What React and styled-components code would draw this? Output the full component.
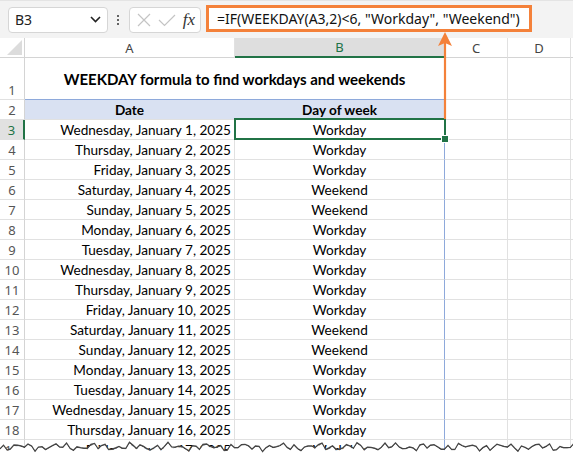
import React from 'react';
import styled, { createGlobalStyle, css } from 'styled-components';

const GlobalStyle = createGlobalStyle`
  html, body {
    margin: 0;
    padding: 0;
    background: #fff;
  }
  body {
    width: 573px;
    height: 456px;
    overflow: hidden;
    font-family: 'Lato', 'Liberation Sans', sans-serif;
  }
`;

const UI_FONT = `'Noto Sans', 'Open Sans', 'Liberation Sans', sans-serif`;
const GRID = '#e1e1e1';
const GREEN = '#217346';
const BLUE = '#8ea9db';
const ORANGE = '#f4813a';

const Sheet = styled.div`
  position: relative;
  width: 573px;
  height: 456px;
  overflow: hidden;
  background: #fff;
`;

/* ---------- formula bar ---------- */

const Toolbar = styled.div`
  display: flex;
  align-items: center;
  height: 38px;
  box-sizing: border-box;
  padding-left: 8px;
  background: #f3f3f3;
  border-top: 1px solid #e4e4e4;
  font-family: ${UI_FONT};
`;

const Box = styled.div`
  display: flex;
  align-items: center;
  box-sizing: border-box;
  height: 26px;
  background: #fff;
  border: 1px solid #d6d6d6;
  border-radius: 4px;
`;

const NameBox = styled(Box)`
  width: 100px;
  padding: 0 6px 0 6px;
  justify-content: space-between;
  font-size: 14px;
  color: #222;
`;

const Dots = styled.div`
  display: flex;
  flex-direction: column;
  gap: 2px;
  margin: 0 10px 0 9px;
  span {
    width: 2px;
    height: 2px;
    border-radius: 1px;
    background: #333;
  }
`;

const IconBox = styled(Box)`
  width: 72px;
  padding: 0 4px 0 6px;
  justify-content: space-between;
`;

const Fx = styled.span`
  font-family: 'Liberation Serif', serif;
  font-style: italic;
  font-size: 17px;
  color: #333;
  margin-right: 1px;
`;

const FormulaBox = styled.div`
  display: flex;
  align-items: center;
  box-sizing: border-box;
  width: 326px;
  height: 27px;
  margin: -3px 0 0 5px;
  padding-left: 8px;
  border: 3px solid ${ORANGE};
  background: #fff;
  font-size: 14px;
  color: #111;
  white-space: nowrap;
`;

/* ---------- worksheet grid ---------- */

const Grid = styled.div`
  display: grid;
  grid-template-columns: 25px 210px 210px 63px 63px 63px;
  grid-template-rows: 20px 42px repeat(18, 20px);
`;

const ColHead = styled.div`
  display: flex;
  align-items: center;
  justify-content: center;
  box-sizing: border-box;
  border-right: 1px solid ${GRID};
  border-bottom: 1px solid #d4d4d4;
  font-family: ${UI_FONT};
  font-size: 13px;
  color: #444;
  background: #fff;
  ${(p) =>
    p.$active &&
    css`
      background: #dedede;
      color: ${GREEN};
      border-bottom: 2px solid ${GREEN};
    `}
`;

const Corner = styled.div`
  position: relative;
  box-sizing: border-box;
  border-right: 1px solid #d4d4d4;
  border-bottom: 1px solid #d4d4d4;
  background: #fff;
  &::after {
    content: '';
    position: absolute;
    right: 2px;
    bottom: 2px;
    border-style: solid;
    border-width: 0 0 15px 15px;
    border-color: transparent transparent #dcdcdc transparent;
  }
`;

const RowHead = styled.div`
  display: flex;
  align-items: ${(p) => (p.$tall ? 'flex-end' : 'center')};
  justify-content: center;
  box-sizing: border-box;
  padding-bottom: ${(p) => (p.$tall ? '0' : '0')};
  border-right: 1px solid #d4d4d4;
  border-bottom: 1px solid ${GRID};
  font-family: ${UI_FONT};
  font-size: 13px;
  color: #555;
  background: #fff;
  ${(p) =>
    p.$active &&
    css`
      background: #e1e1e1;
      color: ${GREEN};
      border-right: 2px solid ${GREEN};
    `}
`;

const Cell = styled.div`
  position: relative;
  display: flex;
  align-items: center;
  justify-content: ${(p) =>
    p.$align === 'right' ? 'flex-end' : p.$align === 'center' ? 'center' : 'flex-start'};
  box-sizing: border-box;
  padding: 0 3px;
  grid-column: ${(p) => (p.$span ? `span ${p.$span}` : 'auto')};
  border-right: 1px solid ${(p) => p.$right || GRID};
  border-bottom: 1px solid ${(p) => p.$bottom || GRID};
  background: ${(p) => p.$fill || '#fff'};
  font-size: ${(p) => (p.$title ? '15px' : '13.6px')};
  font-weight: ${(p) => (p.$bold ? 700 : 400)};
  color: #000;
  white-space: nowrap;
  ${(p) =>
    p.$selected &&
    css`
      &::after {
        content: '';
        position: absolute;
        top: -2px;
        left: -1px;
        right: -2px;
        bottom: -1px;
        border: 2px solid ${GREEN};
        z-index: 2;
      }
      &::before {
        content: '';
        position: absolute;
        right: -5px;
        bottom: -4px;
        width: 6px;
        height: 6px;
        background: ${GREEN};
        border: 1px solid #fff;
        z-index: 3;
      }
    `}
`;

/* ---------- overlays ---------- */

const Pointer = styled.svg`
  position: absolute;
  left: 438px;
  top: 31px;
  z-index: 5;
  pointer-events: none;
`;

const Tear = styled.svg`
  position: absolute;
  left: 0;
  bottom: 0;
  z-index: 6;
`;

function ChevronDown() {
  return (
    <svg width="11" height="7" viewBox="0 0 11 7">
      <path d="M1 1 L5.5 5.5 L10 1" fill="none" stroke="#222" strokeWidth="1.6" />
    </svg>
  );
}

function CancelIcon() {
  return (
    <svg width="16" height="16" viewBox="0 0 16 16">
      <path d="M2 2 L14 14 M14 2 L2 14" stroke="#c4c4c4" strokeWidth="1.2" />
    </svg>
  );
}

function EnterIcon() {
  return (
    <svg width="18" height="14" viewBox="0 0 18 14">
      <path d="M1 7 L6.5 12.5 L17 2" fill="none" stroke="#c4c4c4" strokeWidth="1.2" />
    </svg>
  );
}

// jagged torn-paper edge along the bottom of the sheet
function TornEdge() {
  const pts = [];
  for (let x = 0; x <= 576; x += 3.5) {
    const y =
      9 +
      2.2 * Math.sin(x * 1.3) +
      1.6 * Math.sin(x * 0.17 + 1) +
      1.2 * Math.sin(x * 2.9 + 0.5);
    pts.push(`${x.toFixed(1)},${y.toFixed(1)}`);
  }
  const line = pts.join(' ');
  return (
    <Tear width="573" height="18" viewBox="0 0 573 18">
      <defs>
        <filter id="tearShadow" x="-5%" y="-50%" width="110%" height="200%">
          <feGaussianBlur stdDeviation="0.7" />
        </filter>
      </defs>
      <polyline points={line} fill="none" stroke="#444" strokeWidth="1.5" filter="url(#tearShadow)" />
      <polygon points={`${line} 576,18 0,18`} fill="#fff" transform="translate(0,1)" />
    </Tear>
  );
}

const WEEKDAYS = ['Sunday', 'Monday', 'Tuesday', 'Wednesday', 'Thursday', 'Friday', 'Saturday'];

const rows = Array.from({ length: 17 }, (_, i) => {
  const day = i + 1;
  const dow = (3 + i) % 7; // 1 Jan 2025 falls on a Wednesday
  const isoDow = dow === 0 ? 7 : dow;
  return {
    date: `${WEEKDAYS[dow]}, January ${day}, 2025`,
    kind: isoDow < 6 ? 'Workday' : 'Weekend',
  };
});

export default function App() {
  return (
    <Sheet>
      <GlobalStyle />
      <Toolbar>
        <NameBox>
          <span>B3</span>
          <ChevronDown />
        </NameBox>
        <Dots>
          <span />
          <span />
          <span />
        </Dots>
        <IconBox>
          <CancelIcon />
          <EnterIcon />
          <Fx>fx</Fx>
        </IconBox>
        <FormulaBox>=IF(WEEKDAY(A3,2)&lt;6, "Workday", "Weekend")</FormulaBox>
      </Toolbar>

      <Grid>
        <Corner />
        <ColHead>A</ColHead>
        <ColHead $active>B</ColHead>
        <ColHead>C</ColHead>
        <ColHead>D</ColHead>
        <ColHead />

        <RowHead $tall>1</RowHead>
        <Cell $span={2} $align="center" $bold $title $bottom={BLUE}>
          WEEKDAY formula to find workdays and weekends
        </Cell>
        <Cell />
        <Cell />
        <Cell />

        <RowHead>2</RowHead>
        <Cell $align="center" $bold $fill="#d9e1f2" $right="#d9e1f2">
          Date
        </Cell>
        <Cell $align="center" $bold $fill="#d9e1f2" $right={BLUE}>
          Day of week
        </Cell>
        <Cell />
        <Cell />
        <Cell />

        {rows.map((r, i) => (
          <React.Fragment key={r.date}>
            <RowHead $active={i === 0}>{i + 3}</RowHead>
            <Cell $align="right">{r.date}</Cell>
            <Cell $align="center" $right={BLUE} $selected={i === 0}>
              {r.kind}
            </Cell>
            <Cell />
            <Cell />
            <Cell />
          </React.Fragment>
        ))}
      </Grid>

      <Pointer width="16" height="89" viewBox="0 0 16 89">
        <line x1="7" y1="10" x2="7" y2="88" stroke={ORANGE} strokeWidth="2.2" />
        <path d="M7 1 L14 15 L7 12 L0 15 Z" fill={ORANGE} />
      </Pointer>

      <TornEdge />
    </Sheet>
  );
}
